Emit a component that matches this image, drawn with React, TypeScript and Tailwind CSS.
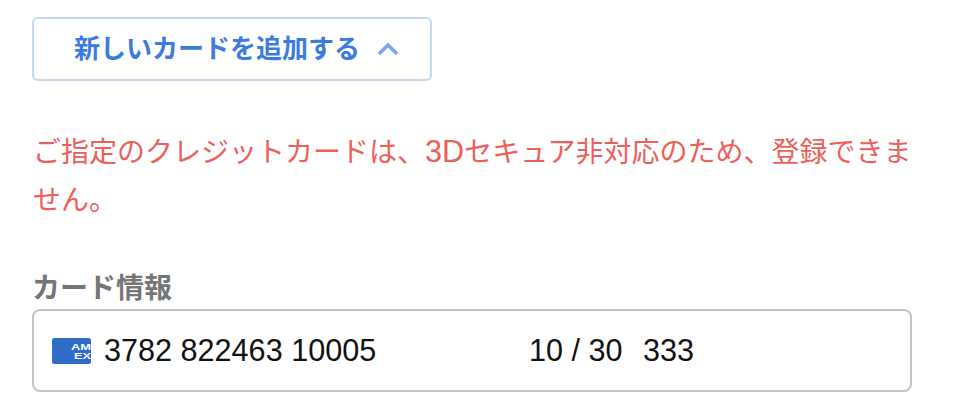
import React from 'react';

const jp = { fontFamily: '"Liberation Sans", "Noto Sans CJK JP", sans-serif' };

const AmexIcon = () => (
  <svg width="39" height="26" viewBox="0 0 39 26" className="shrink-0">
    <rect x="0" y="0" width="39" height="26" rx="2.5" fill="#2f6cc9" />
    <text x="19" y="11.5" fontSize="9" fontWeight="700" textLength="20" lengthAdjust="spacingAndGlyphs" fill="#fff" fontFamily="Liberation Sans">AM</text>
    <text x="22" y="21" fontSize="9" fontWeight="700" textLength="17" lengthAdjust="spacingAndGlyphs" fill="#fff" fontFamily="Liberation Sans">EX</text>
  </svg>
);

const App = () => {
  return (
    <div className="w-[958px] h-[415px] bg-white overflow-hidden pl-[32px] pt-[17px]" style={jp}>
      <button className="flex items-center justify-center w-[400px] h-[64px] pl-[9px] border-2 border-[#c5d8f2] rounded-[6px] bg-white text-[#3b7be0] text-[26px] font-bold">
        新しいカードを追加する
        <svg width="22" height="14" viewBox="0 0 22 14" className="ml-[17px]" fill="none">
          <path d="M2 12 L11 3 L20 12" stroke="#7ba7ee" strokeWidth="3.5" />
        </svg>
      </button>
      <p className="mt-[48px] w-[884px] pl-[1px] text-[#ec5f5a] text-[28px] leading-[48px]">
        ご指定のクレジットカードは、<span className="text-[30.6px] leading-none">3D</span>セキュア非対応のため、登録できません。
      </p>
      <div className="mt-[46px] text-[#757575] text-[28px] font-bold leading-[36px]">カード情報</div>
      <div className="flex items-center w-[880px] h-[83px] mt-[2px] border-2 border-[#c4c4c4] rounded-[8px] pl-[18px] text-[#111111] text-[30.6px]">
        <AmexIcon />
        <span className="ml-[13px] w-[425px]">3782 822463 10005</span>
        <span className="w-[114px]">10 / 30</span>
        <span>333</span>
      </div>
    </div>
  );
};

export default App;
